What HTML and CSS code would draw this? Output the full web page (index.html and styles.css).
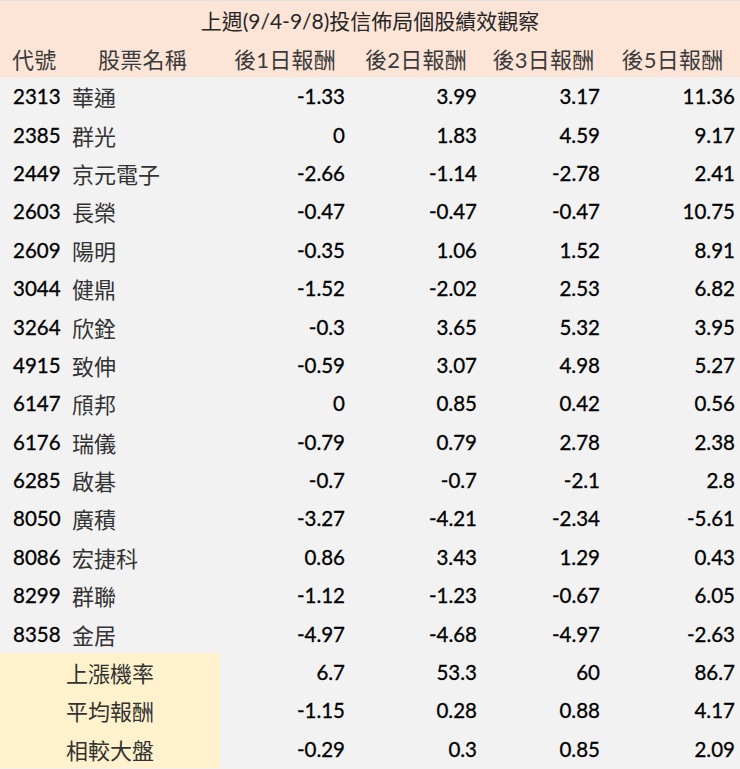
FILE: index.html
```html
<!DOCTYPE html>
<html lang="zh-Hant">
<head>
<meta charset="utf-8">
<title>投信佈局個股績效觀察</title>
<link rel="stylesheet" href="styles.css">
</head>
<body>
<div class="sheet">
  <div class="title">上週(9/4-9/8)投信佈局個股績效觀察</div>

  <div class="hd code">代號</div>
  <div class="hd name">股票名稱</div>
  <div class="hd num">後1日報酬</div>
  <div class="hd num">後2日報酬</div>
  <div class="hd num">後3日報酬</div>
  <div class="hd num">後5日報酬</div>

  <div class="c code">2313</div><div class="c name">華通</div><div class="c v">-1.33</div><div class="c v">3.99</div><div class="c v">3.17</div><div class="c v">11.36</div>
  <div class="c code">2385</div><div class="c name">群光</div><div class="c v">0</div><div class="c v">1.83</div><div class="c v">4.59</div><div class="c v">9.17</div>
  <div class="c code">2449</div><div class="c name">京元電子</div><div class="c v">-2.66</div><div class="c v">-1.14</div><div class="c v">-2.78</div><div class="c v">2.41</div>
  <div class="c code">2603</div><div class="c name">長榮</div><div class="c v">-0.47</div><div class="c v">-0.47</div><div class="c v">-0.47</div><div class="c v">10.75</div>
  <div class="c code">2609</div><div class="c name">陽明</div><div class="c v">-0.35</div><div class="c v">1.06</div><div class="c v">1.52</div><div class="c v">8.91</div>
  <div class="c code">3044</div><div class="c name">健鼎</div><div class="c v">-1.52</div><div class="c v">-2.02</div><div class="c v">2.53</div><div class="c v">6.82</div>
  <div class="c code">3264</div><div class="c name">欣銓</div><div class="c v">-0.3</div><div class="c v">3.65</div><div class="c v">5.32</div><div class="c v">3.95</div>
  <div class="c code">4915</div><div class="c name">致伸</div><div class="c v">-0.59</div><div class="c v">3.07</div><div class="c v">4.98</div><div class="c v">5.27</div>
  <div class="c code">6147</div><div class="c name">頎邦</div><div class="c v">0</div><div class="c v">0.85</div><div class="c v">0.42</div><div class="c v">0.56</div>
  <div class="c code">6176</div><div class="c name">瑞儀</div><div class="c v">-0.79</div><div class="c v">0.79</div><div class="c v">2.78</div><div class="c v">2.38</div>
  <div class="c code">6285</div><div class="c name">啟碁</div><div class="c v">-0.7</div><div class="c v">-0.7</div><div class="c v">-2.1</div><div class="c v">2.8</div>
  <div class="c code">8050</div><div class="c name">廣積</div><div class="c v">-3.27</div><div class="c v">-4.21</div><div class="c v">-2.34</div><div class="c v">-5.61</div>
  <div class="c code">8086</div><div class="c name">宏捷科</div><div class="c v">0.86</div><div class="c v">3.43</div><div class="c v">1.29</div><div class="c v">0.43</div>
  <div class="c code">8299</div><div class="c name">群聯</div><div class="c v">-1.12</div><div class="c v">-1.23</div><div class="c v">-0.67</div><div class="c v">6.05</div>
  <div class="c code">8358</div><div class="c name">金居</div><div class="c v">-4.97</div><div class="c v">-4.68</div><div class="c v">-4.97</div><div class="c v">-2.63</div>

  <div class="c label">上漲機率</div><div class="c v">6.7</div><div class="c v">53.3</div><div class="c v">60</div><div class="c v">86.7</div>
  <div class="c label">平均報酬</div><div class="c v">-1.15</div><div class="c v">0.28</div><div class="c v">0.88</div><div class="c v">4.17</div>
  <div class="c label">相較大盤</div><div class="c v">-0.29</div><div class="c v">0.3</div><div class="c v">0.85</div><div class="c v">2.09</div>
</div>
</body>
</html>
```
FILE: styles.css
```css
html, body {
  margin: 0;
  padding: 0;
  background: #f2f2f2;
}
.sheet {
  width: 740px;
  height: 769px;
  display: grid;
  grid-template-columns: 65px 155px 130px 132px 123px 135px;
  grid-template-rows: 38px 39px repeat(18, 38.4px);
  background: #f2f2f2;
  font-family: "Lato", "Noto Sans CJK TC", sans-serif;
  color: #000;
  overflow: hidden;
}
.title {
  grid-column: 1 / -1;
  background: #fce4d6;
  display: flex;
  align-items: center;
  justify-content: center;
  font-size: 21px;
  color: #262626;
  border-top: 1px solid #e6e0dc;
}
.hd {
  background: #fce4d6;
  display: flex;
  align-items: center;
  font-size: 22px;
  color: #3a3a3a;
  letter-spacing: 0.2px;
}
.hd.code {
  padding-left: 12px;
}
.hd.name {
  justify-content: center;
}
.hd.num {
  justify-content: center;
}
.c {
  display: flex;
  align-items: center;
  font-size: 20.5px;
  white-space: nowrap;
}
.c.code,
.c.v {
  color: #000;
  -webkit-text-stroke: 0.3px #000;
}
.c.code {
  padding-left: 13px;
}
.c.name {
  padding-left: 7px;
  font-size: 22px;
  color: #333;
}
.c.v {
  justify-content: flex-end;
  padding-right: 5px;
}
.c.label {
  grid-column: 1 / 3;
  justify-content: center;
  background: #fff2cc;
  font-size: 22px;
  color: #333;
}
```
